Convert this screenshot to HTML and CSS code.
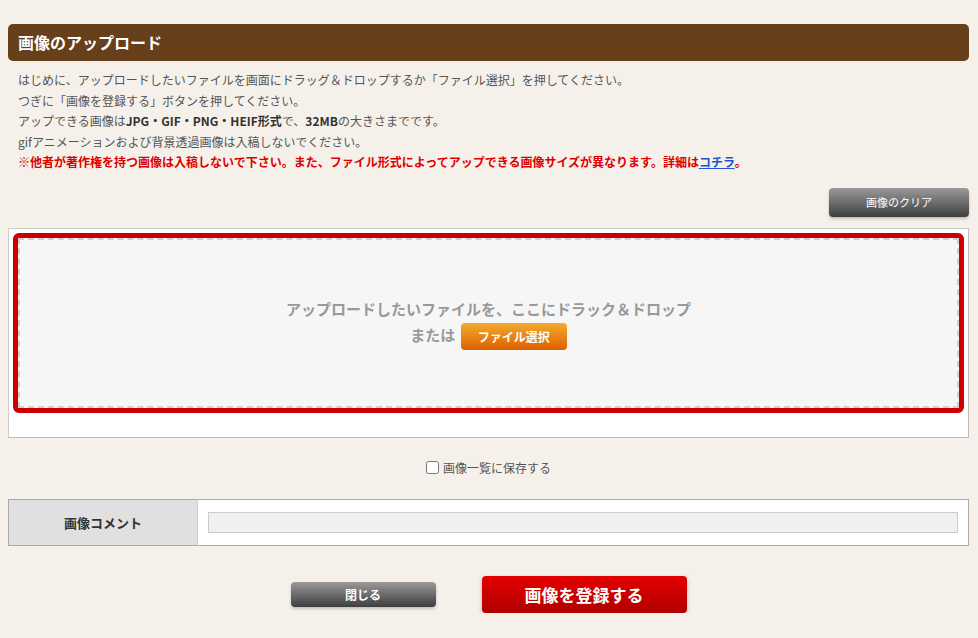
FILE: index.html
```html
<!DOCTYPE html>
<html lang="ja">

<head>
    <meta charset="UTF-8">
    <meta name="viewport" content="width=device-width, initial-scale=1.0">
    <title>画像のアップロード</title>
    <link rel="stylesheet" href="styles.css">
</head>

<body>
    <div class="upload-container">
        <h2 class="section-title">画像のアップロード</h2>

        <div class="description">
            <p>はじめに、アップロードしたいファイルを画面にドラッグ＆ドロップするか「ファイル選択」を押してください。</p>
            <p>つぎに「画像を登録する」ボタンを押してください。</p>
            <p>アップできる画像は<b>JPG・GIF・PNG・HEIF形式</b>で、<b>32MB</b>の大きさまでです。</p>
            <p>gifアニメーションおよび背景透過画像は入稿しないでください。</p>
            <p class="warning">※他者が著作権を持つ画像は入稿しないで下さい。また、ファイル形式によってアップできる画像サイズが異なります。詳細は<a href="#">コチラ</a>。</p>
        </div>

        <div class="clear-row">
            <button class="btn btn-gray btn-clear">画像のクリア</button>
        </div>

        <div class="drop-wrap">
            <div class="drop-frame">
                <div class="drop-zone">
                    <p class="drop-text">アップロードしたいファイルを、ここにドラック＆ドロップ</p>
                    <p class="drop-text">または <button class="btn btn-orange">ファイル選択</button></p>
                </div>
            </div>
        </div>

        <label class="save-row">
            <input type="checkbox" class="save-check">
            <span>画像一覧に保存する</span>
        </label>

        <table class="comment-table">
            <tr>
                <th>画像コメント</th>
                <td><input type="text" class="comment-input"></td>
            </tr>
        </table>

        <div class="action-row">
            <button class="btn btn-gray btn-close">閉じる</button>
            <button class="btn btn-red">画像を登録する</button>
        </div>
    </div>
</body>

</html>
```

FILE: styles.css
```css
body {
    margin: 0;
    background-color: #f5f1ea;
    font-family: "Noto Sans CJK JP", "Noto Sans", sans-serif;
    color: #555;
}

.upload-container {
    margin: 0 9px 0 8px;
    padding-top: 24px;
}

.section-title {
    margin: 0;
    height: 37px;
    line-height: 37px;
    padding-left: 10px;
    background-color: #673f1a;
    color: #fff;
    font-size: 16px;
    font-weight: bold;
    border-radius: 5px;
}

.description {
    margin-top: 9px;
    padding-left: 10px;
    font-size: 12px;
    line-height: 20.6px;
}

.description p {
    margin: 0;
}

.description b {
    color: #333;
}

.warning {
    color: #dd0000;
    font-weight: bold;
}

.warning a {
    color: #2255cc;
}

.clear-row {
    display: flex;
    justify-content: flex-end;
    margin-top: 15px;
}

.btn {
    border: none;
    color: #fff;
    font-family: inherit;
    font-weight: bold;
    cursor: pointer;
    padding: 0;
}

.btn-gray {
    background: linear-gradient(#9a9a9a, #3e3e3e);
    border-radius: 4px;
    box-shadow: 0 2px 3px rgba(0, 0, 0, 0.2);
}

.btn-clear {
    width: 140px;
    height: 29px;
    font-size: 11px;
    font-weight: normal;
}

.drop-wrap {
    margin-top: 11px;
    height: 200px;
    padding: 4px;
    background-color: #fff;
    border: 1px solid #ccc;
    border-right-color: #bbb;
    border-bottom-color: #bbb;
}

.drop-frame {
    border: 5px solid #cc0000;
    border-radius: 6px;
}

.drop-zone {
    height: 170px;
    border: 2px dashed #cfcfcf;
    background-color: #f6f6f6;
    display: flex;
    flex-direction: column;
    justify-content: center;
    align-items: center;
    box-sizing: border-box;
}

.drop-text {
    margin: 0;
    color: #999;
    font-size: 15px;
    font-weight: bold;
    line-height: 26px;
}

.btn-orange {
    width: 106px;
    height: 27px;
    margin-left: 2px;
    font-size: 12px;
    background: linear-gradient(#f3ab2e, #dd6000);
    border-radius: 4px;
    vertical-align: middle;
}

.save-row {
    display: flex;
    justify-content: center;
    align-items: center;
    gap: 4px;
    margin-top: 21px;
    font-size: 12px;
}

.save-check {
    width: 13px;
    height: 13px;
    margin: 0;
}

.comment-table {
    width: 100%;
    margin-top: 23px;
    border-collapse: collapse;
    border: 1px solid #aaa;
    background-color: #fff;
}

.comment-table th {
    width: 188px;
    height: 45px;
    padding: 0;
    background-color: #e0e0e0;
    border-right: 1px solid #ccc;
    color: #333;
    font-size: 13px;
}

.comment-table td {
    padding: 0 10px;
}

.comment-input {
    display: block;
    width: 100%;
    height: 21px;
    box-sizing: border-box;
    background-color: #f0f0f0;
    border: 1px solid #ccc;
}

.action-row {
    display: flex;
    justify-content: center;
    align-items: center;
    gap: 46px;
    margin-top: 30px;
}

.btn-close {
    width: 145px;
    height: 25px;
    font-size: 12px;
}

.btn-red {
    width: 205px;
    height: 37px;
    font-size: 17px;
    background: linear-gradient(#e40000, #b00000);
    border-radius: 4px;
    box-shadow: 0 2px 4px rgba(0, 0, 0, 0.25);
}
```
